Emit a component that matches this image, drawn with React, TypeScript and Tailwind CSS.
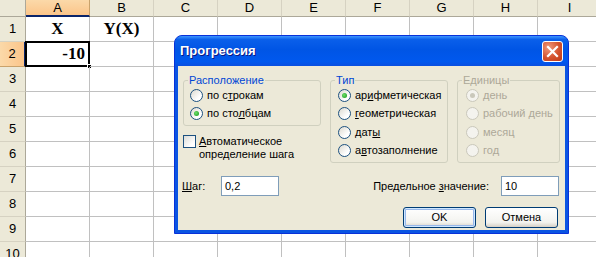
import React from "react";

const cols = ["A", "B", "C", "D", "E", "F", "G", "H", "I"];
const rows = [1, 2, 3, 4, 5, 6, 7, 8, 9, 10];

function Radio({ checked, disabled }: { checked?: boolean; disabled?: boolean }) {
  return (
    <span
      className={
        "relative flex items-center justify-center w-[13px] h-[13px] rounded-full border shrink-0 " +
        (disabled
          ? "border-[#cac8bb] bg-[#f4f3ee]"
          : "border-[#1c5180] bg-[linear-gradient(135deg,#dcd9cf,#ffffff_70%)]")
      }
    >
      {checked && (
        <span
          className={
            "w-[5px] h-[5px] rounded-full " +
            (disabled ? "bg-[#cac8bb]" : "bg-[radial-gradient(circle_at_40%_40%,#6ee06a,#14931a)]")
          }
        />
      )}
    </span>
  );
}

function RadioRow({
  children,
  checked,
  disabled,
}: {
  children: React.ReactNode;
  checked?: boolean;
  disabled?: boolean;
}) {
  return (
    <div className={"flex items-center gap-[4px] h-[18.5px] " + (disabled ? "text-[#aca899]" : "text-black")}>
      <Radio checked={checked} disabled={disabled} />
      <span className="leading-[13px]">{children}</span>
    </div>
  );
}

function Button({ children, def }: { children: React.ReactNode; def?: boolean }) {
  return (
    <div
      className={
        "w-[73px] h-[21px] rounded-[3px] border border-[#003c74] flex items-center justify-center bg-[linear-gradient(180deg,#ffffff,#f3f3ef_75%,#d6d0c5)] " +
        (def ? "shadow-[inset_0_0_0_1px_#cee7ff,inset_0_0_0_2px_#98b8ea]" : "")
      }
    >
      {children}
    </div>
  );
}

export default function App() {
  return (
    <div className="relative w-[596px] h-[257px] overflow-hidden bg-white font-['Liberation_Sans',Arial,sans-serif]">
      {/* Spreadsheet grid */}
      <div className="grid grid-cols-[26px_repeat(9,64px)] grid-rows-[17px_repeat(10,25px)] w-[602px]">
        <div className="bg-[#ece9d8] border-r border-b border-[#aca899]" />
        {cols.map((c) => (
          <div
            key={c}
            className={
              "flex items-center justify-center text-[13px] text-black border-r " +
              (c === "A"
                ? "bg-[linear-gradient(180deg,#fbd9a9,#fbc58a)] border-b-2 border-b-[#0a246a] border-r-[#c9a26b]"
                : "bg-[#ece9d8] border-b border-b-[#aca899] border-r-[#d6d2c2]")
            }
          >
            {c}
          </div>
        ))}
        {rows.map((r) => (
          <React.Fragment key={r}>
            <div
              className={
                "flex items-center justify-center text-[13px] text-black border-b " +
                (r === 2
                  ? "bg-[linear-gradient(90deg,#fbd9a9,#fbc58a)] border-r-2 border-r-[#0a246a] border-b-[#c9a26b]"
                  : "bg-[#ece9d8] border-r border-r-[#aca899] border-b-[#d6d2c2]")
              }
            >
              {r}
            </div>
            {cols.map((c) => {
              const sel = r === 2 && c === "A";
              let content: React.ReactNode = null;
              if (r === 1 && c === "A") content = "X";
              if (r === 1 && c === "B") content = "Y(X)";
              return (
                <div
                  key={c}
                  className={
                    "relative flex items-center border-r border-b border-[#c0c0c0] font-['Liberation_Serif','Times_New_Roman',serif] font-bold text-[17px] text-black " +
                    (sel ? "justify-end pr-[4px]" : "justify-center")
                  }
                >
                  {sel ? "-10" : content}
                  {sel && (
                    <>
                      <span className="absolute -left-[1px] -top-[1px] -right-[1px] -bottom-[1px] border-2 border-black" />
                      <span className="absolute -right-[3px] -bottom-[3px] w-[5px] h-[5px] bg-black border border-white" />
                    </>
                  )}
                </div>
              );
            })}
          </React.Fragment>
        ))}
      </div>

      {/* Dialog window */}
      <div className="absolute left-[174px] top-[35px] w-[395px] h-[199px] rounded-t-[8px] overflow-hidden flex flex-col bg-[#0a54e2] border border-[#0831d9] text-[11px] text-black">
        <div className="h-[30px] shrink-0 flex items-center pl-[5px] pr-[5px] bg-[linear-gradient(180deg,#3d95ff_0%,#0a5fea_12%,#0055e5_45%,#0058ee_85%,#0a4fe0_100%)]">
          <span className="text-white font-bold text-[13px] [text-shadow:1px_1px_0_#0a1883]">Прогрессия</span>
          <div className="ml-auto w-[21px] h-[21px] rounded-[3px] border border-white bg-[radial-gradient(circle_at_30%_30%,#f09a7d,#d4522e_55%,#bf3a17)] flex items-center justify-center">
            <svg width="13" height="13" viewBox="0 0 13 13">
              <path d="M2 2 L11 11 M11 2 L2 11" stroke="white" strokeWidth="2.2" strokeLinecap="square" />
            </svg>
          </div>
        </div>
        <div className="flex-1 mx-[3px] mb-[3px] bg-[#ece9d8] flex flex-col pt-[8px]">
          {/* Row 1 */}
          <div className="flex gap-[9px] pl-[5px]">
            <div className="flex flex-col w-[138px]">
              <fieldset className="h-[52px] border border-[#d0d0bf] rounded-[3px] pl-[4px]">
                <legend className="px-[1px] leading-[13px] text-[#0046d5]">Расположение</legend>
                <div className="ml-[2px] -mt-[1px]">
                  <RadioRow>
                    по с<u>т</u>рокам
                  </RadioRow>
                  <RadioRow checked>
                    по сто<u>л</u>бцам
                  </RadioRow>
                </div>
              </fieldset>
              <div className="flex gap-[3px] mt-[9px]">
                <span className="w-[13px] h-[13px] border border-[#1c5180] bg-[linear-gradient(135deg,#dcdcd7,#ffffff_75%)] shrink-0" />
                <span className="leading-[13px]">
                  <u>А</u>втоматическое
                  <br />
                  определение шага
                </span>
              </div>
            </div>
            <fieldset className="w-[118px] h-[89px] border border-[#d0d0bf] rounded-[3px] pl-[4px]">
              <legend className="px-[1px] leading-[13px] text-[#0046d5]">Тип</legend>
              <div className="ml-[3px] -mt-[1px]">
                <RadioRow checked>
                  ар<u>и</u>фметическая
                </RadioRow>
                <RadioRow>
                  <u>г</u>еометрическая
                </RadioRow>
                <RadioRow>
                  дат<u>ы</u>
                </RadioRow>
                <RadioRow>
                  а<u>в</u>тозаполнение
                </RadioRow>
              </div>
            </fieldset>
            <fieldset className="w-[103px] h-[89px] border border-[#d0d0bf] rounded-[3px] pl-[4px]">
              <legend className="px-[1px] leading-[13px] text-[#aca899]">Единицы</legend>
              <div className="ml-[4px] -mt-[1px]">
                <RadioRow checked disabled>
                  день
                </RadioRow>
                <RadioRow disabled>рабочий день</RadioRow>
                <RadioRow disabled>месяц</RadioRow>
                <RadioRow disabled>год</RadioRow>
              </div>
            </fieldset>
          </div>

          {/* Row 2 */}
          <div className="flex items-center mt-[13px] pl-[4px] pr-[6px]">
            <span className="w-[39px]">
              <u>Ш</u>аг:
            </span>
            <div className="w-[58px] h-[20px] border border-[#7f9db9] bg-white flex items-center pl-[3px]">0,2</div>
            <span className="ml-auto mr-[12px]">
              Предельное <u>з</u>начение:
            </span>
            <div className="w-[58px] h-[20px] border border-[#7f9db9] bg-white flex items-center pl-[3px]">10</div>
          </div>

          {/* Row 3 */}
          <div className="flex justify-end gap-[9px] mt-[11px] pr-[7px]">
            <Button def>OK</Button>
            <Button>Отмена</Button>
          </div>
        </div>
      </div>
    </div>
  );
}
